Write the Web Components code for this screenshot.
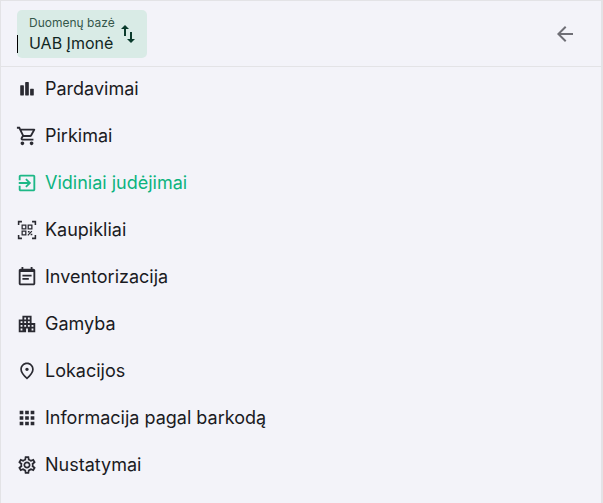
<!DOCTYPE html>
<html lang="lt">
<head>
<meta charset="utf-8">
<title>Meniu</title>
<style>
    html, body { margin: 0; height: 100%; background: #f3f3f9; }
    body { font-family: "Inter", "Noto Sans", sans-serif; }
</style>
</head>
<body>
<app-sidebar>
    <db-switcher slot="header" label="Duomenų bazė" name="UAB Įmonė"></db-switcher>
    <nav-item icon="bar" label="Pardavimai"></nav-item>
    <nav-item icon="cart" label="Pirkimai"></nav-item>
    <nav-item icon="move" label="Vidiniai judėjimai" active></nav-item>
    <nav-item icon="scan" label="Kaupikliai"></nav-item>
    <nav-item icon="event" label="Inventorizacija"></nav-item>
    <nav-item icon="city" label="Gamyba"></nav-item>
    <nav-item icon="place" label="Lokacijos"></nav-item>
    <nav-item icon="apps" label="Informacija pagal barkodą"></nav-item>
    <nav-item icon="gear" label="Nustatymai"></nav-item>
</app-sidebar>

<script>
// Icon paths, viewBox 0 0 24 24 (mostly Material, a few redrawn to fit)
const ICONS = {
    bar: '<rect x="4.6" y="8" width="4" height="11" rx=".5"/><rect x="10" y="4.4" width="4" height="14.6" rx=".5"/><rect x="15.4" y="11.7" width="4" height="7.3" rx=".5"/>',
    cart: '<path d="M15.55 13c.75 0 1.41-.41 1.75-1.03l3.58-6.49c.37-.66-.11-1.48-.87-1.48H5.21l-.94-2H1v2h2l3.6 7.59-1.35 2.44C4.52 15.37 5.48 17 7 17h12v-2H7l1.1-2h7.45zM6.16 6h12.15l-2.76 5H8.53L6.16 6zM7 18c-1.1 0-1.99.9-1.99 2S5.9 22 7 22s2-.9 2-2-.9-2-2-2zm10 0c-1.1 0-1.99.9-1.99 2s.89 2 1.99 2 2-.9 2-2-.9-2-2-2z"/>',
    move: '<path d="M10.09 15.59L11.5 17l5-5-5-5-1.41 1.41L12.67 11H3v2h9.67l-2.58 2.59zM19 3H5c-1.11 0-2 .9-2 2v4h2V5h14v14H5v-4H3v4c0 1.1.89 2 2 2h14c1.1 0 2-.9 2-2V5c0-1.1-.9-2-2-2z"/>',
    scan: '<path d="M2 2h4.5v1.7H3.7v2.8H2zM17.5 2H22v4.5h-1.7V3.7h-2.8zM2 17.5h1.7v2.8h2.8V22H2zM20.3 17.5H22V22h-4.5v-1.7h2.8z"/><path fill="none" stroke="currentColor" stroke-width="1.4" d="M6.7 6.7h4v4h-4zM13.3 6.7h4v4h-4zM6.7 13.3h4v4h-4z"/><path d="M13 13h1.8v1.8H13zM16 16h1.8v1.8H16zM16.8 12.9l1 .8-4.4 4.6-1-.8z"/>',
    event: '<path fill-rule="evenodd" d="M19 3h-1V1h-2v2H8V1H6v2H5c-1.1 0-2 .9-2 2v14c0 1.1.9 2 2 2h14c1.1 0 2-.9 2-2V5c0-1.1-.9-2-2-2zm0 16H5V6.6h14V19z"/><path d="M7 9.6h10v1.9H7zM7 13.2h7v1.9H7z"/>',
    city: '<path d="M17 11V3H7v4H3v14h8v-4h2v4h8V11h-4zM7 19H5v-2h2v2zm0-4H5v-2h2v2zm0-4H5V9h2v2zm4 4H9v-2h2v2zm0-4H9V9h2v2zm0-4H9V5h2v2zm4 8h-2v-2h2v2zm0-4h-2V9h2v2zm0-4h-2V5h2v2zm4 12h-2v-2h2v2zm0-4h-2v-2h2v2z"/>',
    place: '<path d="M12 12c-1.1 0-2-.9-2-2s.9-2 2-2 2 .9 2 2-.9 2-2 2zm6-1.8C18 6.57 15.35 4 12 4s-6 2.57-6 6.2c0 2.34 1.95 5.44 6 9.14 4.05-3.7 6-6.8 6-9.14zM12 2c4.2 0 8 3.22 8 8.2 0 3.32-2.67 7.25-8 11.8-5.33-4.55-8-8.48-8-11.8C4 5.22 7.8 2 12 2z" transform="translate(12 12) scale(.92) translate(-12 -12)"/>',
    apps: '<path d="M4 8h4V4H4v4zm6 12h4v-4h-4v4zm-6 0h4v-4H4v4zm0-6h4v-4H4v4zm6 0h4v-4h-4v4zm6-10v4h4V4h-4zm-6 4h4V4h-4v4zm6 6h4v-4h-4v4zm0 6h4v-4h-4v4z"/>',
    gear: '<path transform="translate(12 12) scale(.96) translate(-12 -12)" d="M19.43 12.98c.04-.32.07-.64.07-.98 0-.34-.03-.66-.07-.98l2.11-1.65c.19-.15.24-.42.12-.64l-2-3.46c-.09-.16-.26-.25-.44-.25-.06 0-.12.01-.17.03l-2.49 1c-.52-.4-1.08-.73-1.69-.98l-.38-2.65C14.46 2.18 14.25 2 14 2h-4c-.25 0-.46.18-.49.42l-.38 2.65c-.61.25-1.17.59-1.69.98l-2.49-1c-.06-.02-.12-.03-.18-.03-.17 0-.34.09-.43.25l-2 3.46c-.13.22-.07.49.12.64l2.11 1.65c-.04.32-.07.65-.07.98 0 .33.03.66.07.98l-2.11 1.65c-.19.15-.24.42-.12.64l2 3.46c.09.16.26.25.44.25.06 0 .12-.01.17-.03l2.49-1c.52.4 1.08.73 1.69.98l.38 2.65c.03.24.24.42.49.42h4c.25 0 .46-.18.49-.42l.38-2.65c.61-.25 1.17-.59 1.69-.98l2.49 1c.06.02.12.03.18.03.17 0 .34-.09.43-.25l2-3.46c.12-.22.07-.49-.12-.64l-2.11-1.65zm-1.98-1.71c.04.31.05.52.05.73 0 .21-.02.43-.05.73l-.14 1.13.89.7 1.08.84-.7 1.21-1.27-.51-1.04-.42-.9.68c-.43.32-.84.56-1.25.73l-1.06.43-.16 1.13-.2 1.35h-1.4l-.19-1.35-.16-1.13-1.06-.43c-.43-.18-.83-.41-1.23-.71l-.91-.7-1.06.43-1.27.51-.7-1.21 1.08-.84.89-.7-.14-1.13c-.03-.31-.05-.54-.05-.74s.02-.43.05-.73l.14-1.13-.89-.7-1.08-.84.7-1.21 1.27.51 1.04.42.9-.68c.43-.32.84-.56 1.25-.73l1.06-.43.16-1.13.2-1.35h1.39l.19 1.35.16 1.13 1.06.43c.43.18.83.41 1.23.71l.91.7 1.06-.43 1.27-.51.7 1.21-1.07.85-.89.7.14 1.13zM12 8c-2.21 0-4 1.79-4 4s1.79 4 4 4 4-1.79 4-4-1.79-4-4-4zm0 6c-1.1 0-2-.9-2-2s.9-2 2-2 2 .9 2 2-.9 2-2 2z"/>',
    swap: '<path d="M16 17.01V10h-2v7.01h-3L15 21l4-3.99h-3zM9 3L5 6.99h3V14h2V6.99h3L9 3z"/>',
    back: '<path d="M20 11H7.83l5.59-5.59L12 4l-8 8 8 8 1.41-1.41L7.83 13H20v-2z"/>',
};

function icon(name, size) {
    return `<svg viewBox="0 0 24 24" width="${size}" height="${size}" fill="currentColor" aria-hidden="true">${ICONS[name]}</svg>`;
}

class AppSidebar extends HTMLElement {
    constructor() {
        super();
        this.attachShadow({ mode: "open" });
        this.shadowRoot.innerHTML = `
            <style>
                :host {
                    display: block;
                    box-sizing: border-box;
                    height: 503px;
                    background: #f3f3f9;
                    border: 1px solid #e3e3e6;
                    border-right-width: 2px;
                    border-bottom: none;
                    overflow: hidden;
                }
                header {
                    display: flex;
                    align-items: center;
                    justify-content: space-between;
                    height: 65px;
                    padding: 0 24px 0 16px;
                    border-bottom: 1px solid #e3e3e6;
                }
                button {
                    display: flex;
                    padding: 0;
                    border: none;
                    background: none;
                    color: #6f6f76;
                }
                nav {
                    display: flex;
                    flex-direction: column;
                }
            </style>
            <header>
                <slot name="header"></slot>
                <button type="button" aria-label="Atgal">${icon("back", 24)}</button>
            </header>
            <nav><slot></slot></nav>
        `;
    }
}

class DbSwitcher extends HTMLElement {
    constructor() {
        super();
        this.attachShadow({ mode: "open" });
    }

    connectedCallback() {
        this.shadowRoot.innerHTML = `
            <style>
                :host {
                    display: flex;
                    align-items: center;
                    position: relative;
                    box-sizing: border-box;
                    width: 130px;
                    height: 48px;
                    padding: 0 0 0 12px;
                    border-radius: 5px;
                    background: #d9ebe6;
                    color: #0b3b2c;
                }
                .text { display: flex; flex-direction: column; gap: 2px; }
                .label { font-size: 12px; line-height: 16px; color: #35574b; }
                .name { font-size: 16px; line-height: 20px; color: #10261f; }
                svg { margin: 0 0 0 1px; flex: none; }
                .caret {
                    position: absolute;
                    left: 0;
                    top: 25px;
                    width: 1px;
                    height: 18px;
                    background: #000;
                }
            </style>
            <span class="caret"></span>
            <div class="text">
                <span class="label">${this.getAttribute("label")}</span>
                <span class="name">${this.getAttribute("name")}</span>
            </div>
            ${icon("swap", 24)}
        `;
    }
}

class NavItem extends HTMLElement {
    constructor() {
        super();
        this.attachShadow({ mode: "open" });
    }

    connectedCallback() {
        this.shadowRoot.innerHTML = `
            <style>
                :host {
                    display: flex;
                    align-items: center;
                    gap: 7px;
                    box-sizing: border-box;
                    height: 47px;
                    padding: 0 0 3px 15px;
                    font-size: 18px;
                    color: #1a1a22;
                }
                :host([active]) { color: #0bb37e; }
                svg { opacity: .92; }
                span { margin-bottom: 2px; }
            </style>
            ${icon(this.getAttribute("icon"), 22)}
            <span>${this.getAttribute("label")}</span>
        `;
    }
}

customElements.define("app-sidebar", AppSidebar);
customElements.define("db-switcher", DbSwitcher);
customElements.define("nav-item", NavItem);
</script>
</body>
</html>
